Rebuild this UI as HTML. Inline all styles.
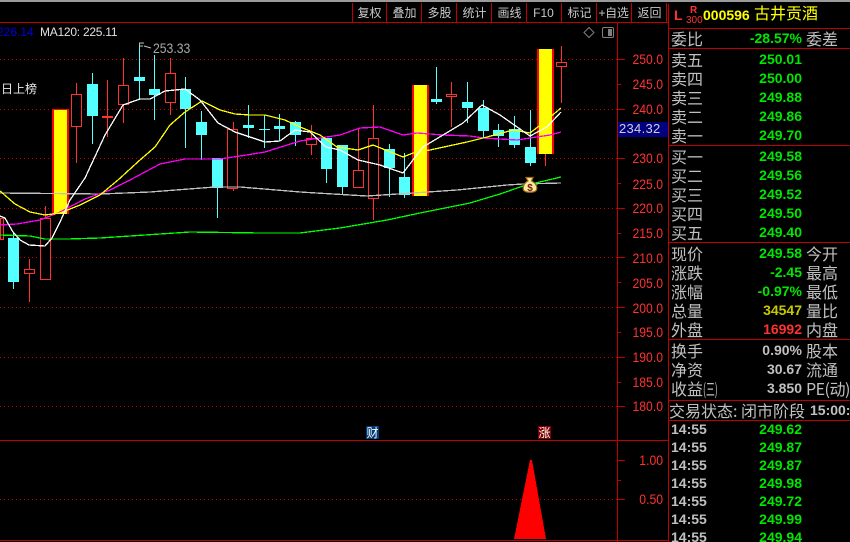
<!DOCTYPE html>
<html><head><meta charset="utf-8"><style>
html,body{margin:0;padding:0;background:#000;width:850px;height:542px;overflow:hidden}
#r{position:relative;width:850px;height:542px;overflow:hidden;font-family:"Liberation Sans","WenQuanYi Zen Hei","Noto Sans CJK SC",sans-serif}
#r svg{position:absolute;left:0;top:0}
.t{position:absolute;white-space:nowrap;line-height:18px;height:18px}
.l{left:671px;color:#c0c0c0;font-size:16px;font-family:"WenQuanYi Zen Hei","Noto Sans CJK SC",sans-serif}
.x{left:806px;color:#c0c0c0;font-size:16px;font-family:"WenQuanYi Zen Hei","Noto Sans CJK SC",sans-serif}
.v{right:48px;color:#00e600;font-size:14px;font-weight:bold;text-align:right}
.g{color:#c0c0c0}
.m{left:671px;color:#c0c0c0;font-size:14px;font-weight:bold}
.b{top:4px;color:#c8c8c8;font-size:12px;width:35px;text-align:center;font-family:"Liberation Sans","WenQuanYi Zen Hei",sans-serif}
.a{left:618px;width:45px;text-align:right;color:#ff3232;font-size:14px;transform:scaleX(.87);transform-origin:right center}
</style></head><body><div id="r">
<svg width="850" height="542" viewBox="0 0 850 542">
<rect width="850" height="2" fill="#9a9a9a"/>
<g shape-rendering="crispEdges" fill="none" stroke="#c00000" stroke-width="1">
<path d="M0 22.500H668M0 440.500H668M0 540.500H668M617.500 22V542M668.500 4V542M668 28.500H850M668 48.500H850M668 145.500H850M668 242.500H850M668 339.500H850M668 400.500H850M668 420.500H850"/>
<path d="M352.500 3V22M386.500 3V22M421.500 3V22M456.500 3V22M491.500 3V22M526.500 3V22M561.500 3V22M596.500 3V22M631.500 3V22M666.500 3V22"/>
<path d="M617 59.500H625M617 109.500H625M617 158.500H625M617 208.500H625M617 257.500H625M617 307.500H625M617 357.500H625M617 406.500H625M617 84.500H621M617 134.500H621M617 183.500H621M617 233.500H621M617 282.500H621M617 332.500H621M617 382.500H621M617 460.500H625M617 499.500H625M617 480.500H621"/>
<path stroke="#c80000" stroke-dasharray="1 3" d="M0 59.500H617M0 109.500H617M0 158.500H617M0 208.500H617M0 257.500H617M0 307.500H617M0 357.500H617M0 406.500H617M0 499.500H617"/>
</g>
<!-- wicks -->
<g shape-rendering="crispEdges" fill="none" stroke="#54ffff">
<path d="M13.500 233V289M92.500 73V144M139.500 43V99M154.500 55V120M185.500 77V148M201.500 111V160M217.500 158V218M248.500 105V138M264.500 115V148M279.500 114V141M295.500 121V146M326.500 138V183M342.500 145V194M389.500 144V197M404.500 153V198M436.500 67V104M467.500 82V123M483.500 100V138M498.500 124V147M514.500 116V148M530.500 110V166"/>
</g>
<g shape-rendering="crispEdges" fill="none" stroke="#ff3232">
<path d="M29.500 259V302M45.500 206V218M76.500 83V163M107.500 80V137M123.500 58V123M170.500 58V115M233.500 122V191M311.500 125V155M358.500 129V170M373.500 105V220M451.500 82V127M545.500 154V166M561.500 46V103"/>
</g>
<!-- cyan bodies -->
<g shape-rendering="crispEdges" fill="#54ffff">
<rect x="8" y="238" width="11" height="44"/><rect x="87" y="84" width="11" height="32"/><rect x="134" y="77" width="11" height="4"/><rect x="149" y="89" width="11" height="6"/><rect x="180" y="89" width="11" height="20"/><rect x="196" y="122" width="11" height="13"/><rect x="212" y="158" width="11" height="30"/><rect x="243" y="125" width="11" height="3"/><rect x="259" y="129" width="11" height="1"/><rect x="274" y="126" width="11" height="3"/><rect x="290" y="122" width="11" height="13"/><rect x="321" y="138" width="11" height="31"/><rect x="337" y="145" width="11" height="42"/><rect x="384" y="149" width="11" height="19"/><rect x="399" y="177" width="11" height="18"/><rect x="431" y="99" width="11" height="3"/><rect x="462" y="102" width="11" height="6"/><rect x="478" y="108" width="11" height="23"/><rect x="493" y="130" width="11" height="6"/><rect x="509" y="129" width="11" height="16"/><rect x="525" y="147" width="11" height="16"/>
</g>
<!-- red bodies -->
<g shape-rendering="crispEdges" fill="#000" stroke="#ff3232">
<rect x="0.500" y="218.500" width="3" height="21"/><rect x="24.500" y="269.500" width="10" height="4"/><rect x="40.500" y="218.500" width="10" height="61"/><rect x="71.500" y="94.500" width="10" height="32"/><rect x="102.500" y="116.500" width="10" height="1"/><rect x="118.500" y="85.500" width="10" height="19"/><rect x="165.500" y="73.500" width="10" height="29"/><rect x="227.500" y="129.500" width="10" height="59"/><rect x="306.500" y="138.500" width="10" height="6"/><rect x="353.500" y="170.500" width="10" height="17"/><rect x="368.500" y="138.500" width="10" height="60"/><rect x="446.500" y="94.500" width="10" height="2"/><rect x="556.500" y="62.500" width="10" height="4"/>
</g>
<!-- yellow bars -->
<g shape-rendering="crispEdges">
<rect x="52" y="109" width="17" height="105" fill="#f00"/><rect x="54" y="110" width="13" height="104" fill="#ff0"/>
<rect x="412" y="85" width="17" height="111" fill="#f00"/><rect x="414" y="85" width="13" height="111" fill="#ff0"/>
<rect x="537" y="49" width="17" height="105" fill="#f00"/><rect x="539" y="49" width="13" height="105" fill="#ff0"/>
</g>
<!-- MAs -->
<g fill="none" stroke-width="1.300" shape-rendering="crispEdges">
<polyline stroke="#c0c0c0" points="0,193 100,194 150,192 215,187 240,187 300,192 333,194 367,196 413,193 457,190 507,185 523,184 561,183"/>
<polyline stroke="#00ff00" points="0,235 30,236 45,239 68,239 100,238 145,235 190,232 260,233 300,233 340,228 387,220 420,213 470,203 500,194 523,186 561,177"/>
<polyline stroke="#ff00ff" points="0,225 17,224 40,220 60,212 85,199 110,190 130,180 160,164 185,159 220,159 240,156 265,152 300,141 340,135 360,128 380,127 403,135 417,133 443,135 470,136 483,138 517,140 530,138 550,135 561,132"/>
<polyline stroke="#ffff00" points="0,191 15,204 30,212 45,215 60,213 80,205 100,195 118,180 140,160 155,147 170,125 185,112 202,101 220,110 235,114 250,115 265,115 285,120 300,127 320,135 337,147 358,150 373,145 403,157 413,153 430,150 467,142 487,137 513,130 530,133 543,123 561,108"/>
<polyline stroke="#ffffff" points="0,216 5,218 13,232 20,240 29,245 45,246 52,238 60,222 70,200 85,178 105,135 123,105 140,99 150,99 165,91 185,89 200,100 218,123 235,132 250,137 265,142 280,141 295,130 310,132 326,147 340,150 358,160 380,165 403,173 423,147 443,135 463,123 482,105 500,115 530,136 547,127 561,112"/>
</g>
<!-- marker -->
<path d="M139.500 46V43H144M140 46H143M144 46L151 48" fill="none" stroke="#c0c0c0"/>
<!-- icons -->
<path d="M589 27.500L594 32.500L589 37.500L584 32.500Z" fill="none" stroke="#808080"/>
<rect x="602.500" y="27.500" width="11" height="10" rx="1.500" fill="none" stroke="#808080"/><rect x="608" y="29" width="4" height="7" fill="#808080" shape-rendering="crispEdges"/>
<!-- bag -->
<path d="M526 177.500L533 177.500L531.500 181C536 183 537.500 187 536.500 190C534.500 193 525.500 193 523.500 190C522.500 187 524 183 528 181Z" fill="#ffe9a0" stroke="#a07010" stroke-width="1.200"/>
<text x="530" y="191" text-anchor="middle" font-family="Liberation Sans" font-size="10" font-weight="bold" fill="#702010">$</text>
<!-- triangle -->
<path d="M530 460L532 460L546 539H514Z" fill="#f00" shape-rendering="crispEdges"/>
<rect x="366" y="426" width="13" height="13" fill="#003c78" shape-rendering="crispEdges"/>
<rect x="538" y="426" width="13" height="13" fill="#800000" shape-rendering="crispEdges"/>
<rect x="618" y="122" width="50" height="15" fill="#000080" shape-rendering="crispEdges"/>
</svg>

<span class="t" style="left:366px;top:424px;width:13px;text-align:center;font-size:12px;color:#fff;font-family:'WenQuanYi Zen Hei',sans-serif">财</span>
<span class="t" style="left:538px;top:424px;width:13px;text-align:center;font-size:12px;color:#fff;font-family:'WenQuanYi Zen Hei',sans-serif">涨</span>

<span class="t" style="left:-3px;top:23px;color:#0000e0;font-size:12px">226.14</span>
<span class="t" style="left:40px;top:23px;color:#e0e0e0;font-size:12px;letter-spacing:-.25px">MA120: 225.11</span>
<span class="t" style="left:153px;top:39px;color:#a8a8a8;font-size:14px;transform:scaleX(.87);transform-origin:left center">253.33</span>
<span class="t" style="left:1px;top:80px;color:#e8e8e8;font-size:12px;font-family:'WenQuanYi Zen Hei',sans-serif">日上榜</span>

<span class="t b" style="left:352px">复权</span><span class="t b" style="left:387px">叠加</span><span class="t b" style="left:422px">多股</span><span class="t b" style="left:457px">统计</span><span class="t b" style="left:492px">画线</span><span class="t b" style="left:526px">F10</span><span class="t b" style="left:562px">标记</span><span class="t b" style="left:596px;letter-spacing:-.3px">+自选</span><span class="t b" style="left:632px">返回</span>

<span class="t a" style="top:50px">250.0</span><span class="t a" style="top:100px">240.0</span><span class="t a" style="top:75px">245.0</span><span class="t a" style="top:149px">230.0</span><span class="t a" style="top:175px">225.0</span><span class="t a" style="top:199px">220.0</span><span class="t a" style="top:224px">215.0</span><span class="t a" style="top:249px">210.0</span><span class="t a" style="top:274px">205.0</span><span class="t a" style="top:299px">200.0</span><span class="t a" style="top:323px">195.0</span><span class="t a" style="top:348px">190.0</span><span class="t a" style="top:373px">185.0</span><span class="t a" style="top:397px">180.0</span><span class="t a" style="top:451px">1.00</span><span class="t a" style="top:490px">0.50</span>
<span class="t" style="left:619px;top:120px;color:#d0d0d0;font-size:13px;letter-spacing:.3px">234.32</span>

<span class="t" style="left:674px;top:6px;color:#ff3232;font-size:14px;font-weight:bold">L</span>
<span class="t" style="left:690px;top:2px;color:#ff3232;font-size:10px;font-weight:bold">R</span>
<span class="t" style="left:686px;top:12px;color:#ff3232;font-size:10px">300</span>
<span class="t" style="left:703px;top:6px;color:#ffff00;font-size:14px;font-weight:bold">000596</span>
<span class="t" style="left:754px;top:6px;color:#ffff00;font-size:16px;font-family:'WenQuanYi Zen Hei',sans-serif">古井贡酒</span>

<span class="t l" style="top:29px">委比</span><span class="t v" style="top:29px">-28.57%</span><span class="t x" style="top:29px">委差</span>
<span class="t l" style="top:50px">卖五</span><span class="t v" style="top:50px">250.01</span>
<span class="t l" style="top:69px">卖四</span><span class="t v" style="top:69px">250.00</span>
<span class="t l" style="top:88px">卖三</span><span class="t v" style="top:88px">249.88</span>
<span class="t l" style="top:107px">卖二</span><span class="t v" style="top:107px">249.86</span>
<span class="t l" style="top:126px">卖一</span><span class="t v" style="top:126px">249.70</span>
<span class="t l" style="top:147px">买一</span><span class="t v" style="top:147px">249.58</span>
<span class="t l" style="top:166px">买二</span><span class="t v" style="top:166px">249.56</span>
<span class="t l" style="top:185px">买三</span><span class="t v" style="top:185px">249.52</span>
<span class="t l" style="top:204px">买四</span><span class="t v" style="top:204px">249.50</span>
<span class="t l" style="top:223px">买五</span><span class="t v" style="top:223px">249.40</span>
<span class="t l" style="top:244px">现价</span><span class="t v" style="top:244px">249.58</span><span class="t x" style="top:244px">今开</span>
<span class="t l" style="top:263px">涨跌</span><span class="t v" style="top:263px">-2.45</span><span class="t x" style="top:263px">最高</span>
<span class="t l" style="top:282px">涨幅</span><span class="t v" style="top:282px">-0.97%</span><span class="t x" style="top:282px">最低</span>
<span class="t l" style="top:301px">总量</span><span class="t v" style="top:301px;color:#c8c800">34547</span><span class="t x" style="top:301px">量比</span>
<span class="t l" style="top:320px">外盘</span><span class="t v" style="top:320px;color:#ff3232">16992</span><span class="t x" style="top:320px">内盘</span>
<span class="t l" style="top:341px">换手</span><span class="t v g" style="top:341px">0.90%</span><span class="t x" style="top:341px">股本</span>
<span class="t l" style="top:360px">净资</span><span class="t v g" style="top:360px">30.67</span><span class="t x" style="top:360px">流通</span>
<span class="t l" style="top:379px">收益<span style="display:inline-block;transform:scaleX(.55);transform-origin:left center">(三)</span></span><span class="t v g" style="top:379px">3.850</span><span class="t x" style="top:379px;letter-spacing:-.5px">PE(动)</span>
<span class="t l" style="top:401px;left:669px">交易状态: 闭市阶段</span><span class="t m" style="top:401px;left:810px">15:00:</span>
<span class="t m" style="top:420px">14:55</span><span class="t v" style="top:420px">249.62</span>
<span class="t m" style="top:438px">14:55</span><span class="t v" style="top:438px">249.87</span>
<span class="t m" style="top:456px">14:55</span><span class="t v" style="top:456px">249.87</span>
<span class="t m" style="top:474px">14:55</span><span class="t v" style="top:474px">249.98</span>
<span class="t m" style="top:492px">14:55</span><span class="t v" style="top:492px">249.72</span>
<span class="t m" style="top:510px">14:55</span><span class="t v" style="top:510px">249.99</span>
<span class="t m" style="top:528px">14:55</span><span class="t v" style="top:528px">249.94</span>
</div></body></html>
